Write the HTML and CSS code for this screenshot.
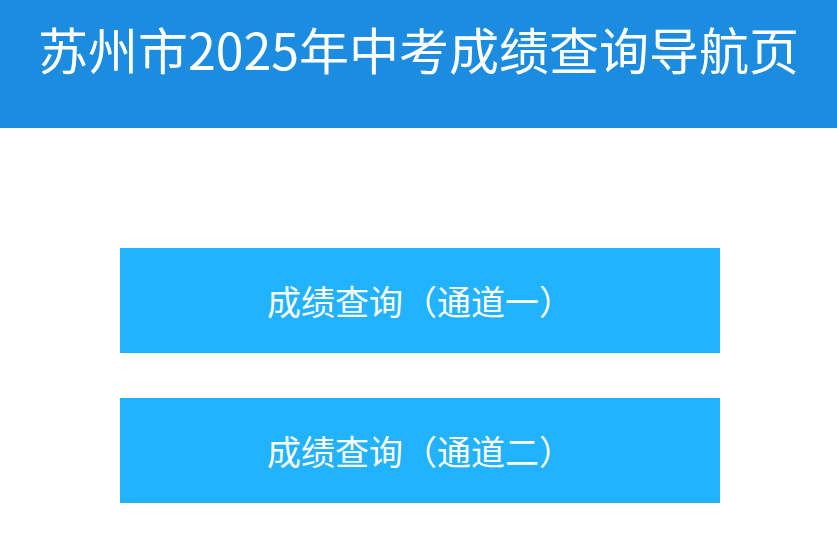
FILE: index.html
```html
<!DOCTYPE html>
<html lang="zh-CN">
<head>
    <meta charset="UTF-8">
    <meta name="viewport" content="width=device-width, initial-scale=1.0">
    <title>苏州市2025年中考成绩查询导航页</title>
    <link rel="stylesheet" href="styles.css">
</head>
<body>

<div class="header">
    <h1>苏州市2025年中考成绩查询导航页</h1>
</div>

<div class="links">
    <a class="btn" href="#">成绩查询（通道一）</a>
    <a class="btn" href="#">成绩查询（通道二）</a>
</div>

</body>
</html>
```

FILE: styles.css
```css
body {
    font-family: "Noto Sans CJK SC", "Noto Sans", sans-serif;
    background-color: #fff;
    margin: 0;
    padding: 0;
}
.header {
    background-color: #1b8ce0;
    height: 128px;
    padding-top: 20px;
    box-sizing: border-box;
}
h1 {
    margin: 0;
    text-align: center;
    color: #fff;
    font-size: 50px;
    font-weight: normal;
    line-height: 56px;
}
.links {
    width: 600px;
    margin: 120px 0 0 120px;
    display: flex;
    flex-direction: column;
    gap: 45px;
}
.btn {
    display: flex;
    align-items: center;
    justify-content: center;
    height: 105px;
    background-color: #21b3ff;
    color: #fff;
    font-size: 34px;
    text-decoration: none;
}
```
